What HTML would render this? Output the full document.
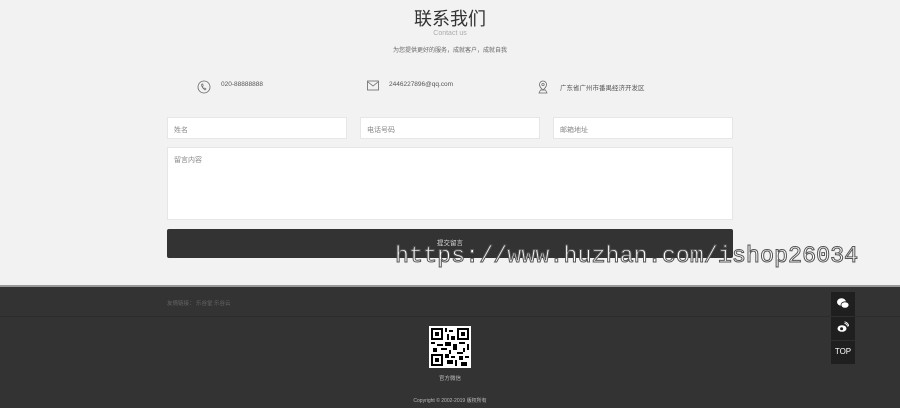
<!DOCTYPE html>
<html><head><meta charset="utf-8"><style>
*{margin:0;padding:0;box-sizing:border-box}
body{width:900px;height:408px;overflow:hidden;background:#f2f2f2;font-family:"Liberation Sans","Noto Sans CJK SC",sans-serif;position:relative}
.a{position:absolute}
.c{left:0;width:900px;text-align:center}
.in{background:#fff;border:1px solid #e6e6e6;font-size:7px;color:#888;padding:7px 6px}
</style></head><body>
<div class="a c" style="top:5px;font-size:18px;color:#333">联系我们</div>
<div class="a c" style="top:30px;font-size:7px;color:#aaa">Contact us</div>
<div class="a c" style="top:45px;font-size:6px;color:#666">为您提供更好的服务，成就客户，成就自我</div>
<svg class="a" style="left:197px;top:80px" width="14" height="14" viewBox="0 0 14 14"><circle cx="7" cy="7" r="6" fill="none" stroke="#666" stroke-width="0.8"/><path d="M5 4c-1 1 0 4 3 6l1-1-1.2-1-1 .5c-.7-.6-1.3-1.4-1.4-2l.8-.6L5.8 4z" fill="none" stroke="#666" stroke-width="0.7"/></svg>
<div class="a" style="left:221px;top:81px;font-size:6.5px;color:#555">020-88888888</div>
<svg class="a" style="left:367px;top:80px" width="12" height="11" viewBox="0 0 12 11"><rect x="0.5" y="1" width="11" height="9" fill="none" stroke="#666" stroke-width="0.8"/><path d="M1 2l5 4 5-4" fill="none" stroke="#666" stroke-width="0.8"/></svg>
<div class="a" style="left:389px;top:81px;font-size:6.5px;color:#555">2446227896@qq.com</div>
<svg class="a" style="left:537px;top:80px" width="12" height="14" viewBox="0 0 12 14"><path d="M6 1a3.5 3.5 0 0 1 3.5 3.5C9.5 7 6 10 6 10S2.5 7 2.5 4.5A3.5 3.5 0 0 1 6 1z" fill="none" stroke="#666" stroke-width="0.8"/><circle cx="6" cy="4.5" r="1.2" fill="none" stroke="#666" stroke-width="0.7"/><path d="M2 13l1.5-3h5L10 13z" fill="none" stroke="#666" stroke-width="0.7"/></svg>
<div class="a" style="left:560px;top:82px;font-size:6.5px;color:#555">广东省广州市番禺经济开发区</div>
<div class="a in" style="left:167px;top:117px;width:180px;height:22px">姓名</div>
<div class="a in" style="left:360px;top:117px;width:180px;height:22px">电话号码</div>
<div class="a in" style="left:553px;top:117px;width:180px;height:22px">邮箱地址</div>
<div class="a in" style="left:167px;top:147px;width:566px;height:73px">留言内容</div>
<div class="a" style="left:167px;top:229px;width:566px;height:29px;background:#333;border-radius:2px;color:#ddd;font-size:6.5px;text-align:center;line-height:29px">提交留言</div>
<div class="a" style="left:0;top:285px;width:900px;height:2px;background:#999"></div>
<div class="a" style="left:0;top:287px;width:900px;height:121px;background:#333"></div>
<div class="a" style="left:0;top:316px;width:900px;height:1px;background:#2c2c2c"></div>
<div class="a" style="left:167px;top:299px;font-size:5.5px;color:#666">友情链接： 乐谷堂 乐谷云</div>
<svg class="a" style="left:429px;top:326px" width="42" height="42" viewBox="0 0 21 21" shape-rendering="crispEdges"><rect width="21" height="21" fill="#fff"/><g fill="#000"><path d="M1 1h6v6H1zM14 1h6v6h-6zM1 14h6v6H1z"/></g><g fill="#fff"><path d="M2 2h4v4H2zM15 2h4v4h-4zM2 15h4v4H2z"/></g><g fill="#000"><path d="M3 3h2v2H3zM16 3h2v2h-2zM3 16h2v2H3zM8 1h1v2H8zM10 2h2v1h-2zM9 4h1v3H9zM11 5h2v2h-2zM1 8h2v1H1zM4 9h3v1H4zM8 8h3v2H8zM12 9h2v3h-2zM15 8h3v1h-3zM19 9h1v3h-1zM2 11h2v2H2zM6 11h3v1H6zM10 12h1v2h-1zM14 13h3v1h-3zM17 11h1v2h-1zM8 14h2v2H8zM11 15h2v1h-2zM9 17h3v2H9zM13 17h1v3h-1zM15 15h2v2h-2zM18 15h2v1h-2zM16 18h3v2h-3z"/></g></svg>
<div class="a c" style="top:374px;font-size:5.5px;color:#bbb">官方微信</div>
<div class="a c" style="top:397px;font-size:5px;color:#bbb">Copyright © 2002-2019 版权所有</div>
<div class="a" style="left:831px;top:292px;width:24px;height:72px;background:#1f1f1f"></div>
<div class="a" style="left:831px;top:316px;width:24px;height:1px;background:#2e2e2e"></div>
<div class="a" style="left:831px;top:340px;width:24px;height:1px;background:#2e2e2e"></div>
<svg class="a" style="left:836px;top:297px" width="14" height="13" viewBox="0 0 14 13"><ellipse cx="5.5" cy="5" rx="4.5" ry="3.8" fill="#fff"/><ellipse cx="9" cy="8" rx="4" ry="3.2" fill="#fff" stroke="#1f1f1f" stroke-width="0.8"/></svg>
<svg class="a" style="left:837px;top:321px" width="12" height="12" viewBox="0 0 12 12"><ellipse cx="5" cy="7.5" rx="4.5" ry="3.3" fill="#fff"/><circle cx="4.6" cy="7.8" r="1.5" fill="#1f1f1f"/><path d="M7.5 2.5a3 3 0 0 1 3 3M7.5 0.8a4.7 4.7 0 0 1 4.2 4.5" fill="none" stroke="#fff" stroke-width="0.9"/></svg>
<div class="a" style="left:831px;top:347px;width:24px;text-align:center;font-size:8px;color:#fff">TOP</div>
<div class="a" style="left:395px;top:244px;font-family:'Liberation Mono',monospace;font-size:23.4px;color:#fff;-webkit-text-stroke:1px #555;white-space:nowrap">https://www.huzhan.com/ishop26034</div>
</body></html>
